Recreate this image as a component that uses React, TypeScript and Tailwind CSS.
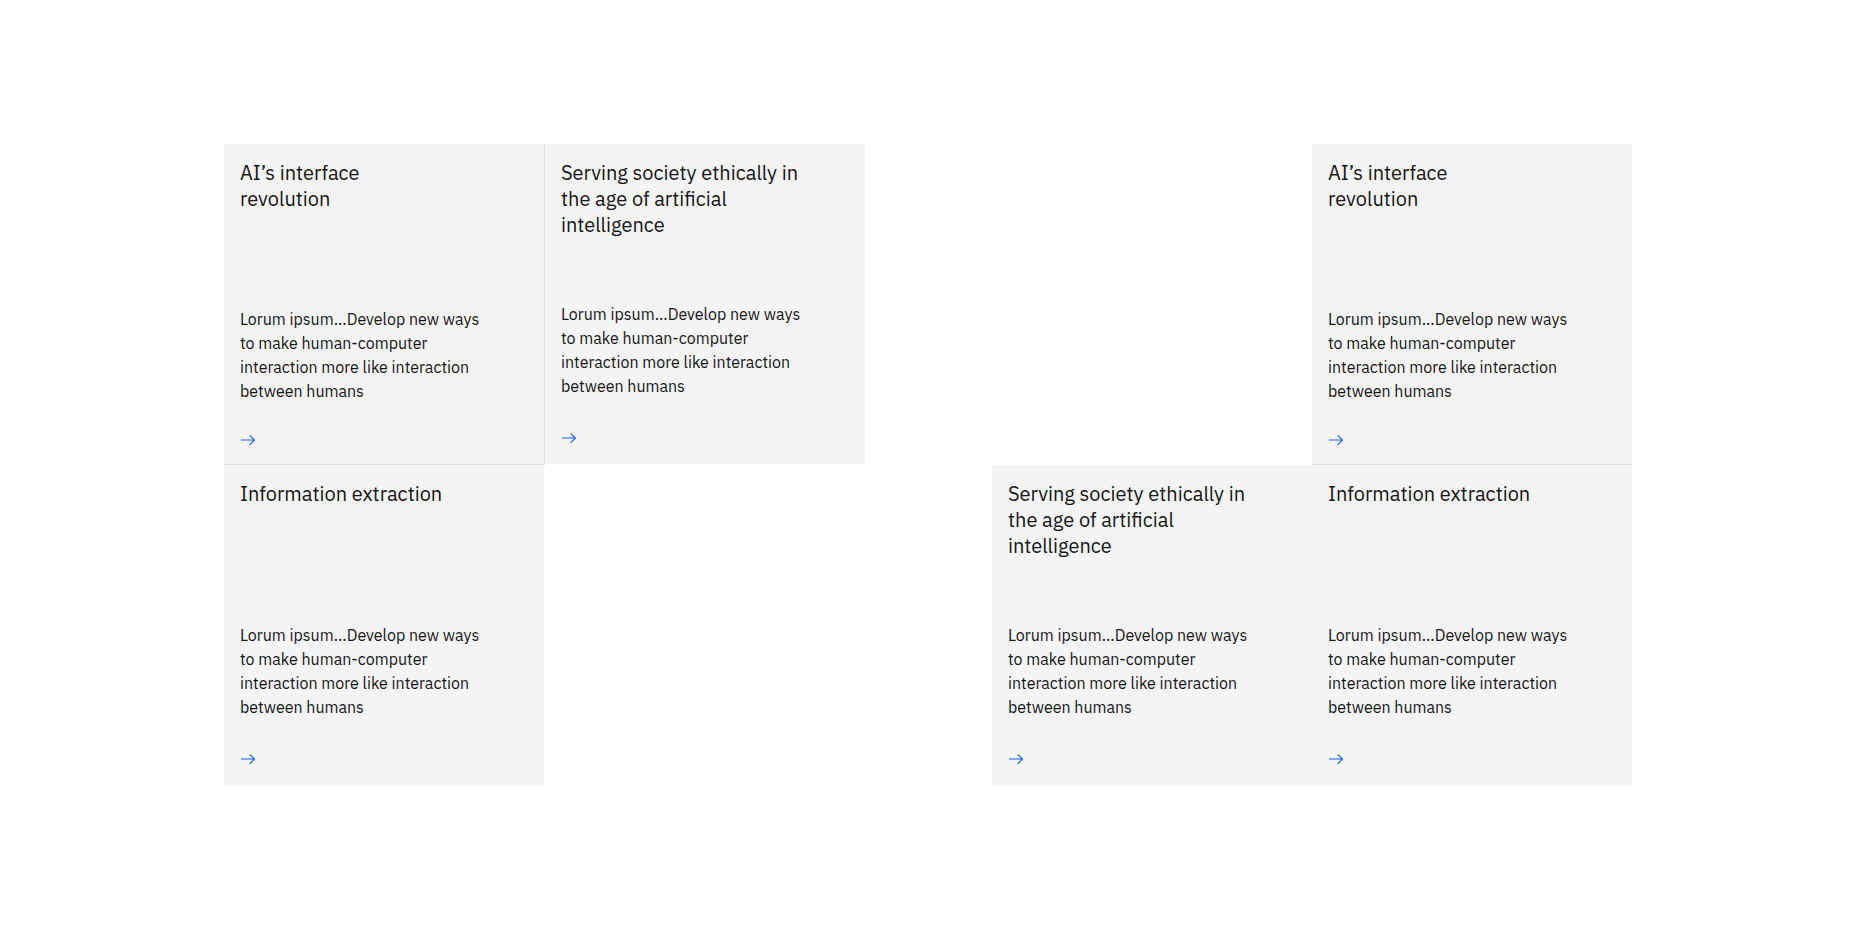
type Card = {
  id: string;
  title: string[];
};

const body = [
  "Lorum ipsum...Develop new ways",
  "to make human-computer",
  "interaction more like interaction",
  "between humans",
];

const ai: Card = { id: "ai", title: ["AI’s interface", "revolution"] };
const serving: Card = {
  id: "serving",
  title: ["Serving society ethically in", "the age of artificial", "intelligence"],
};
const info: Card = { id: "info", title: ["Information extraction"] };

// carbon-style arrow--right, 16px
function ArrowIcon() {
  return (
    <svg width="16" height="16" viewBox="0 0 16 16" fill="currentColor" className="text-[#0f62fe]">
      <path d="M9.3 3.7l3.8 3.8H1v1.1h12.1l-3.8 3.8.8.8 5.1-5.15-5.1-5.15z" />
    </svg>
  );
}

function Tile({ card, bordered, className = "" }: { card: Card; bordered?: boolean; className?: string }) {
  return (
    <a
      href="#"
      className={`flex flex-col bg-[#f4f4f4] px-4 pt-4 text-[#161616] ${
        bordered ? "pb-[14px]" : "pb-4"
      } ${className}`}
    >
      <h3 className="whitespace-nowrap text-[20px] font-normal leading-[26px]">
        {card.title.map((line, i) => (
          <span key={i} className="block">
            {line}
          </span>
        ))}
      </h3>
      <p
        className={`mt-auto whitespace-nowrap text-[16px] leading-[24px] ${
          bordered ? "mb-[27px]" : "mb-[30px]"
        }`}
      >
        {body.map((line, i) => (
          <span key={i} className="block">
            {line}
          </span>
        ))}
      </p>
      <div className="flex h-5 items-center">
        <ArrowIcon />
      </div>
    </a>
  );
}

export default function App() {
  return (
    <div
      className="min-h-screen bg-white pt-[144px]"
      style={{ fontFamily: '"IBM Plex Sans", Roboto, "Noto Sans", sans-serif' }}
    >
      <div className="mx-auto flex w-[1408px] justify-between">
        <div className="grid grid-cols-[321px_320px] grid-rows-[321px_320px]">
          <Tile card={ai} bordered className="h-[321px] w-[321px] border-b border-r border-[#e0e0e0]" />
          <Tile card={serving} className="h-[320px] w-[320px] self-start" />
          <Tile card={info} className="h-[320px] w-[320px]" />
        </div>

        <div className="grid grid-cols-[320px_320px] grid-rows-[321px_320px]">
          <Tile card={ai} bordered className="col-start-2 h-[321px] w-[320px] border-b border-[#e0e0e0]" />
          <Tile card={serving} className="col-start-1 row-start-2 h-[320px] w-[320px]" />
          <Tile card={info} className="col-start-2 row-start-2 h-[320px] w-[320px]" />
        </div>
      </div>
    </div>
  );
}
